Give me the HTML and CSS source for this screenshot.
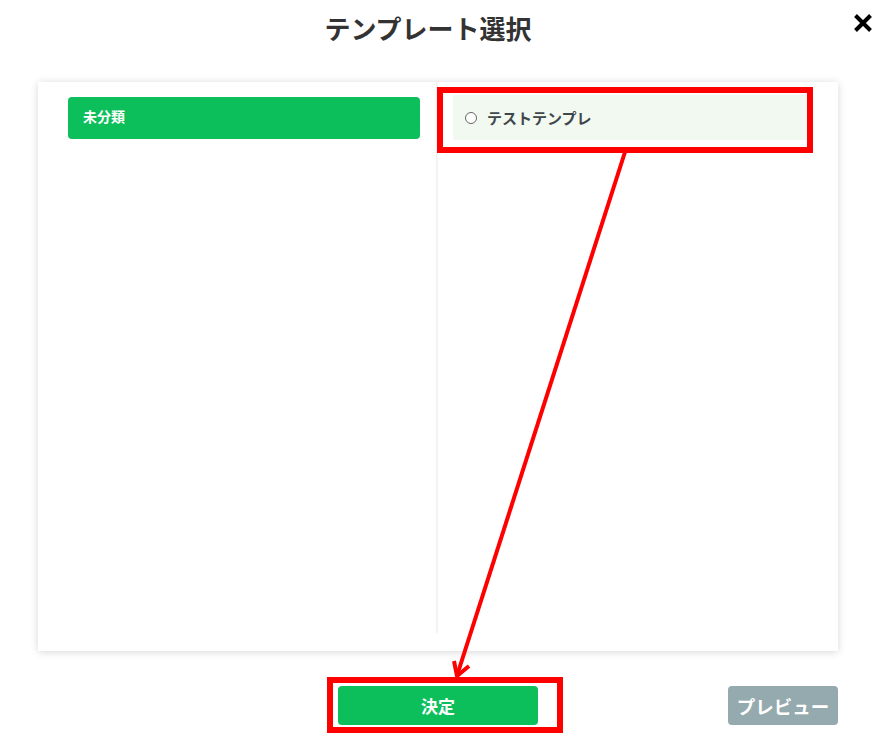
FILE: index.html
```html
<!DOCTYPE html>
<html lang="ja">
<head>
<meta charset="utf-8">
<title>テンプレート選択</title>
<link rel="stylesheet" href="styles.css">
</head>
<body>
<div class="page">
  <header class="header">
    <h1 class="title">テンプレート選択</h1>
    <button class="close" aria-label="閉じる">
      <svg width="20" height="20" viewBox="0 0 20 20"><path d="M2.5 2.5 L17.5 17.5 M17.5 2.5 L2.5 17.5" stroke="#000" stroke-width="4" stroke-linecap="butt"/></svg>
    </button>
  </header>
  <main class="card">
    <section class="categories">
      <div class="category active">未分類</div>
    </section>
    <section class="templates">
      <label class="template">
        <span class="radio"></span>
        <span class="template-name">テストテンプレ</span>
      </label>
    </section>
  </main>
  <footer class="footer">
    <span></span>
    <button class="btn btn-ok">決定</button>
    <button class="btn btn-preview">プレビュー</button>
  </footer>
  <svg class="annotations" width="873" height="749" viewBox="0 0 873 749">
    <rect x="440" y="90" width="370" height="60" fill="none" stroke="#ff0000" stroke-width="6"/>
    <rect x="330" y="680" width="230" height="50" fill="none" stroke="#ff0000" stroke-width="6"/>
    <line x1="625" y1="152" x2="457.5" y2="674" stroke="#ff0000" stroke-width="4"/>
    <path d="M454 661 L457 676 L469 666" fill="none" stroke="#ff0000" stroke-width="4" stroke-linejoin="miter"/>
  </svg>
</div>
</body>
</html>
```

FILE: styles.css
```css
* { box-sizing: border-box; }
html, body {
  margin: 0;
  padding: 0;
  background: #fff;
  font-family: "Noto Sans CJK JP", "Noto Sans", sans-serif;
}
.page {
  position: relative;
  width: 873px;
  height: 749px;
  overflow: hidden;
}
.header {
  position: relative;
  height: 55px;
  display: flex;
  justify-content: center;
  align-items: center;
  padding-right: 17px;
}
.title {
  margin: 0;
  font-size: 26px;
  font-weight: 700;
  color: #333;
  line-height: 55px;
}
.close {
  position: absolute;
  right: 0;
  top: 13px;
  width: 20px;
  height: 20px;
  padding: 0;
  border: none;
  background: none;
  display: block;
}
.close svg { display: block; }
.card {
  margin: 27px 0 0 38px;
  width: 800px;
  height: 569px;
  background: #fff;
  box-shadow: 0 1px 8px rgba(0, 0, 0, 0.16);
  display: grid;
  grid-template-columns: 400px 400px;
  padding-bottom: 18px;
}
.categories {
  padding: 15px 16px 0 30px;
  border-right: 2px solid #f3f3f3;
}
.category {
  height: 42px;
  border-radius: 4px;
  background: #0cbf5a;
  color: #fff;
  font-size: 14px;
  font-weight: 700;
  padding: 0 15px;
  line-height: 38px;
}
.templates {
  padding: 13px 30px 0 15px;
}
.template {
  display: flex;
  align-items: center;
  height: 45px;
  background: #f2f9f1;
  padding-left: 12px;
  border-radius: 2px;
}
.radio {
  width: 12px;
  height: 12px;
  border: 1px solid #666;
  border-radius: 50%;
  background: #fff;
  margin-right: 10px;
  margin-top: 1px;
}
.template-name {
  font-size: 15px;
  font-weight: 700;
  color: #3f474b;
}
.footer {
  margin: 35px 0 0 38px;
  width: 800px;
  display: grid;
  grid-template-columns: 1fr 200px 1fr;
  align-items: center;
}
.btn {
  height: 39px;
  border: none;
  border-radius: 4px;
  color: #fff;
  font-family: "Noto Sans CJK JP", "Noto Sans", sans-serif;
  font-weight: 700;
  padding: 0;
}
.btn-ok {
  background: #0cbf5a;
  font-size: 17px;
}
.btn-preview {
  justify-self: end;
  width: 110px;
  background: #94aaae;
  font-size: 18.5px;
}
.annotations {
  position: absolute;
  left: 0;
  top: 0;
  pointer-events: none;
}
```
